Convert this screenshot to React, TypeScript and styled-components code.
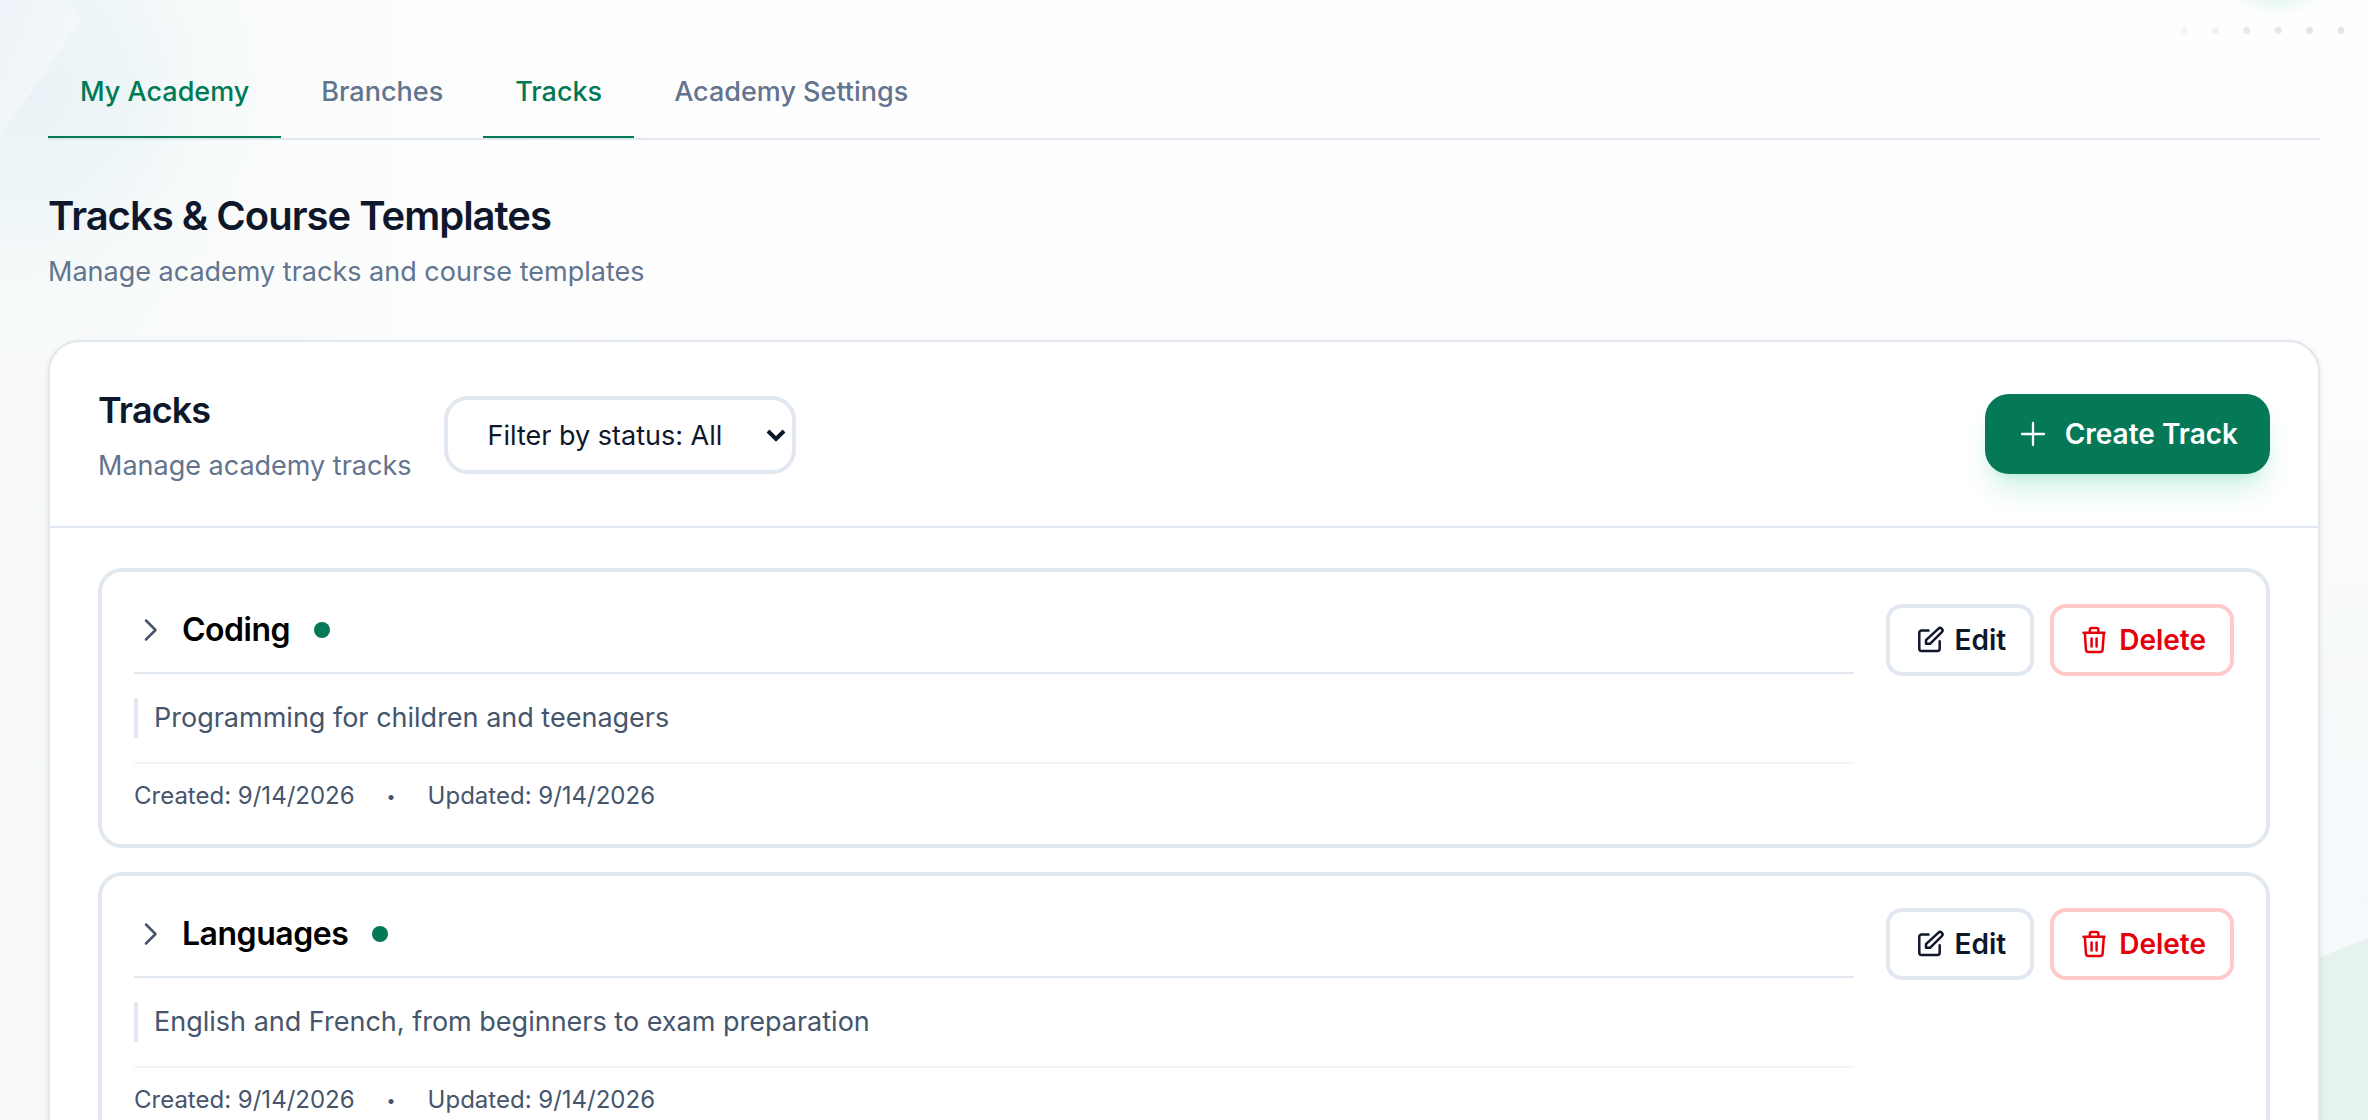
import React from "react";
import styled, { createGlobalStyle } from "styled-components";

const GlobalStyle = createGlobalStyle`
  *, *::before, *::after { box-sizing: border-box; }
  body {
    margin: 0;
    background: #fefefe;
    color: #0f172b;
    font-family: Inter, "Liberation Sans", sans-serif;
    font-size: 27px;
    line-height: 40px;
  }
  h1, h2, h3, p, ul { margin: 0; padding: 0; }
  button, select { font: inherit; cursor: pointer; }
`;

const Page = styled.div`
  position: relative;
  height: 100vh;
  overflow: hidden;
  padding: 48px 48px 0;
`;

const Backdrop = styled.svg`
  position: absolute;
  inset: 0;
  width: 100%;
  height: 100%;
  z-index: -1;
`;

const Tabs = styled.nav`
  display: flex;
  gap: 8px;
  border-bottom: 2px solid #e2e8f0;
`;

const Tab = styled.a<{ $active?: boolean }>`
  padding: 24px 32px;
  border-bottom: 2px solid ${(p) => (p.$active ? "#007a55" : "transparent")};
  color: ${(p) => (p.$active ? "#007a55" : "#62748e")};
  font-weight: 500;
  text-decoration: none;
`;

const PageHeader = styled.header`
  padding: 48px 0;
  display: grid;
  gap: 8px;
`;

const PageTitle = styled.h1`
  font-size: 40px;
  line-height: 56px;
  font-weight: 600;
  letter-spacing: -0.025em;
`;

const Muted = styled.p`
  color: #62748e;
`;

const Panel = styled.section`
  background: #fff;
  border: 2px solid #e2e8f0;
  border-radius: 32px;
  box-shadow: 0 2px 6px rgba(15, 23, 43, 0.1);
`;

const PanelHeader = styled.div`
  display: flex;
  align-items: center;
  justify-content: space-between;
  padding: 40px 48px;
  border-bottom: 2px solid #e2e8f0;
`;

const HeaderGroup = styled.div`
  display: flex;
  align-items: center;
  gap: 32px;
`;

const PanelTitles = styled.div`
  display: grid;
  gap: 8px;
`;

const PanelTitle = styled.h2`
  font-size: 36px;
  line-height: 56px;
  font-weight: 600;
  letter-spacing: -0.025em;
`;

const FilterBox = styled.div`
  display: grid;
  align-items: center;
  padding-top: 2px;

  > * {
    grid-area: 1 / 1;
  }

  > svg {
    justify-self: end;
    margin-right: 4px;
    pointer-events: none;
  }
`;

const Filter = styled.select`
  width: 352px;
  height: 78px;
  padding: 2px 64px 0 40px;
  border: 4px solid #e2e8f0;
  border-radius: 24px;
  background: #fff;
  color: #0f172b;
  appearance: none;
`;

const CreateButton = styled.button`
  display: flex;
  align-items: center;
  gap: 16px;
  height: 80px;
  padding: 0 32px;
  border: 0;
  border-radius: 24px;
  background: #047857;
  color: #fff;
  font-size: 28px;
  font-weight: 600;
  box-shadow: 0 20px 30px -6px rgba(0, 188, 125, 0.2), 0 8px 12px -8px rgba(0, 188, 125, 0.2);
`;

const TrackList = styled.ul`
  display: grid;
  gap: 24px;
  padding: 40px 48px;
  list-style: none;
`;

const TrackCard = styled.li`
  display: flex;
  align-items: flex-start;
  gap: 32px;
  padding: 32px;
  border: 4px solid #e2e8f0;
  border-radius: 24px;
`;

const TrackBody = styled.div`
  flex: 1;
  min-width: 0;
`;

const TrackHead = styled.div`
  display: flex;
  align-items: center;
  height: 70px;
  padding-bottom: 16px;
  border-bottom: 2px solid #e2e8f0;
`;

const ExpandButton = styled.button`
  display: flex;
  width: 32px;
  height: 32px;
  margin-right: 16px;
  padding: 0;
  border: 0;
  background: none;
  color: #45556c;
`;

const TrackName = styled.h3`
  color: #000;
  font-size: 32px;
  line-height: 48px;
  font-weight: 600;
  letter-spacing: -0.015em;
`;

const StatusDot = styled.span`
  width: 16px;
  height: 16px;
  margin-left: 24px;
  border-radius: 50%;
  background: #047857;
`;

const Description = styled.p`
  margin: 24px 0;
  padding-left: 16px;
  border-left: 4px solid #e2e8f0;
  color: #45556c;
`;

const Meta = styled.div`
  display: flex;
  gap: 32px;
  padding-top: 16px;
  border-top: 2px solid #f1f5f9;
  color: #45556c;
  font-size: 24px;
  line-height: 32px;
`;

const Separator = styled.span`
  font-size: 16px;
`;

const Actions = styled.div`
  display: flex;
  gap: 16px;
`;

const ActionButton = styled.button<{ $danger?: boolean }>`
  display: flex;
  align-items: center;
  gap: 9px;
  height: 72px;
  padding: 0 24px;
  border: 4px solid ${(p) => (p.$danger ? "#ffc9c9" : "#e2e8f0")};
  border-radius: 16px;
  background: #fff;
  color: ${(p) => (p.$danger ? "#e7000b" : "#0f172b")};
  font-size: 28px;
  font-weight: 600;
`;

const Icon = ({ stroke = 2, children }: { stroke?: number; children: React.ReactNode }) => (
  <svg
    width="32"
    height="32"
    viewBox="0 0 32 32"
    fill="none"
    stroke="currentColor"
    strokeWidth={stroke}
    strokeLinecap="round"
    strokeLinejoin="round"
    aria-hidden="true"
  >
    {children}
  </svg>
);

const tabs = [
  { label: "My Academy", active: true },
  { label: "Branches" },
  { label: "Tracks", active: true },
  { label: "Academy Settings" },
];

const tracks = [
  { name: "Coding", description: "Programming for children and teenagers" },
  { name: "Languages", description: "English and French, from beginners to exam preparation" },
];

const dots = [0.35, 0.55, 0.85, 0.9, 1, 1];

function PageBackdrop() {
  return (
    <Backdrop viewBox="0 0 2368 1120" preserveAspectRatio="none" aria-hidden="true">
      <defs>
        <linearGradient id="wash" x1="0" x2="1" y1="0" y2="0">
          <stop offset="0" stopColor="#f7faf9" />
          <stop offset="0.1" stopColor="#fafcfb" />
          <stop offset="0.3" stopColor="#fefefe" />
          <stop offset="1" stopColor="#fefefe" />
        </linearGradient>
        <radialGradient id="rightWash" gradientUnits="userSpaceOnUse" cx="2368" cy="900" r="760">
          <stop offset="0" stopColor="#f6f9fb" />
          <stop offset="0.4" stopColor="#f8fafb" />
          <stop offset="1" stopColor="#fefefe" stopOpacity="0" />
        </radialGradient>
        <radialGradient id="facet" gradientUnits="userSpaceOnUse" cx="20" cy="90" r="300">
          <stop offset="0" stopColor="#ebf2f7" />
          <stop offset="0.4" stopColor="#eff6f8" />
          <stop offset="1" stopColor="#f9fcfb" stopOpacity="0" />
        </radialGradient>
        <linearGradient id="band" x1="0" x2="1" y1="0" y2="0.6">
          <stop offset="0" stopColor="#eef3f9" />
          <stop offset="1" stopColor="#f4f9f9" />
        </linearGradient>
        <radialGradient id="glow">
          <stop offset="0" stopColor="#e0f6ef" />
          <stop offset="1" stopColor="#e0f6ef" stopOpacity="0" />
        </radialGradient>
      </defs>
      <rect width="2368" height="1120" fill="url(#wash)" />
      <rect width="2368" height="1120" fill="url(#rightWash)" />
      <rect width="400" height="400" fill="url(#facet)" />
      <path d="M0 0H66L82 20L0 136Z" fill="url(#band)" />
      <ellipse cx="2278" cy="-4" rx="44" ry="20" fill="url(#glow)" />
      {dots.map((opacity, i) => (
        <circle key={i} cx={2184 + i * 31.4} cy="30.5" r="3.5" fill="#e4e5e9" opacity={opacity} />
      ))}
      <path d="M2300 965L2368 938V1120H2300Z" fill="#e5f2ed" />
    </Backdrop>
  );
}

export default function App() {
  return (
    <>
      <GlobalStyle />
      <Page>
        <PageBackdrop />
        <Tabs>
          {tabs.map((tab) => (
            <Tab key={tab.label} href="#" $active={tab.active}>
              {tab.label}
            </Tab>
          ))}
        </Tabs>
        <PageHeader>
          <PageTitle>Tracks &amp; Course Templates</PageTitle>
          <Muted>Manage academy tracks and course templates</Muted>
        </PageHeader>
        <Panel>
          <PanelHeader>
            <HeaderGroup>
              <PanelTitles>
                <PanelTitle>Tracks</PanelTitle>
                <Muted>Manage academy tracks</Muted>
              </PanelTitles>
              <FilterBox>
                <Filter aria-label="Filter by status" defaultValue="all">
                  <option value="all">Filter by status: All</option>
                </Filter>
                <Icon stroke={4}>
                  <path d="M8 12l8 8 8-8" strokeLinecap="butt" strokeLinejoin="miter" />
                </Icon>
              </FilterBox>
            </HeaderGroup>
            <CreateButton type="button">
              <Icon stroke={2.3}>
                <path d="M16 5v22M5 16h22" />
              </Icon>
              Create Track
            </CreateButton>
          </PanelHeader>
          <TrackList>
            {tracks.map((track) => (
              <TrackCard key={track.name}>
                <TrackBody>
                  <TrackHead>
                    <ExpandButton type="button" aria-label={`Expand ${track.name}`}>
                      <Icon stroke={2.5}>
                        <path d="M12 6.5l9.5 9.5L12 25.5" />
                      </Icon>
                    </ExpandButton>
                    <TrackName>{track.name}</TrackName>
                    <StatusDot />
                  </TrackHead>
                  <Description>{track.description}</Description>
                  <Meta>
                    <span>Created: 9/14/2026</span>
                    <Separator>•</Separator>
                    <span>Updated: 9/14/2026</span>
                  </Meta>
                </TrackBody>
                <Actions>
                  <ActionButton type="button">
                    <Icon stroke={2.5}>
                      <path d="M14.5 6.5H7.5a2.2 2.2 0 0 0-2.2 2.2v16a2.2 2.2 0 0 0 2.2 2.2h16a2.2 2.2 0 0 0 2.2-2.2v-7.5" />
                      <path d="M24.2 4.8a2.4 2.4 0 0 1 3.6 3.4L16 19.8h-4v-3.6z" />
                    </Icon>
                    Edit
                  </ActionButton>
                  <ActionButton type="button" $danger>
                    <Icon stroke={2.5}>
                      <path d="M5.5 8.8h21M6.8 8.8l1.2 17a2.3 2.3 0 0 0 2.3 2.2h12a2.3 2.3 0 0 0 2.3-2.2l1.2-17M11.8 8.5V6a2 2 0 0 1 2-2h4.6a2 2 0 0 1 2 2v2.5M13.6 14.5v8M18.6 14.5v8" />
                    </Icon>
                    Delete
                  </ActionButton>
                </Actions>
              </TrackCard>
            ))}
          </TrackList>
        </Panel>
      </Page>
    </>
  );
}
